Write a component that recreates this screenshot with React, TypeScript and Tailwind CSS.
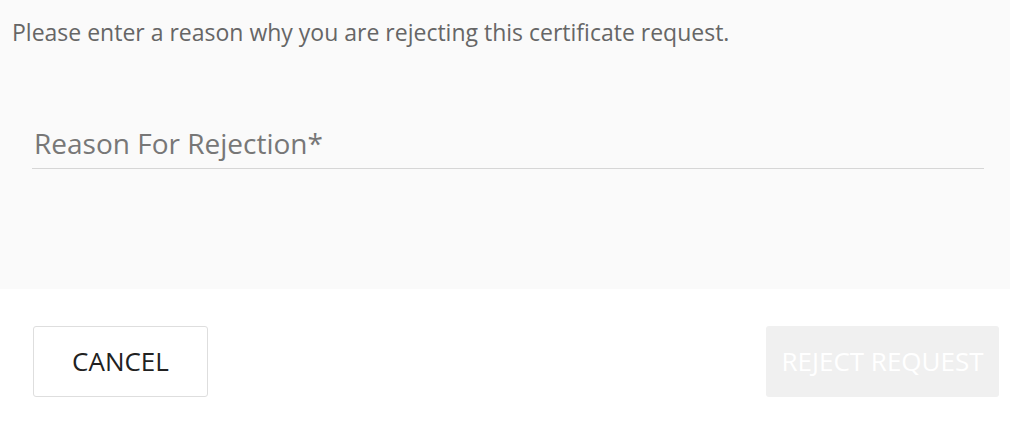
import React from "react";

export default function App() {
  return (
    <div className="w-[1010px] h-[425px] bg-white font-['Open_Sans',sans-serif]">
      <div className="h-[289px] bg-[#fafafa] pt-[16px]">
        <p className="pl-[12px] text-[23px] leading-[32px] text-[#666666]">
          Please enter a reason why you are rejecting this certificate request.
        </p>
        <div className="ml-[32px] mr-[26px] mt-[76px] border-b border-[#d6d6d6] pb-[6px]">
          <span className="pl-[2px] text-[28px] leading-[38px] text-[#777777]">Reason For Rejection*</span>
        </div>
      </div>
      <div className="flex justify-between pl-[33px] pr-[11px] pt-[37px]">
        <button className="w-[175px] h-[71px] rounded-[3px] border border-[#dedede] bg-white text-[26px] text-[#212121]">
          CANCEL
        </button>
        <button className="w-[233px] h-[71px] rounded-[3px] bg-[#f0f0f0] text-[26px] text-white">
          REJECT REQUEST
        </button>
      </div>
    </div>
  );
}
